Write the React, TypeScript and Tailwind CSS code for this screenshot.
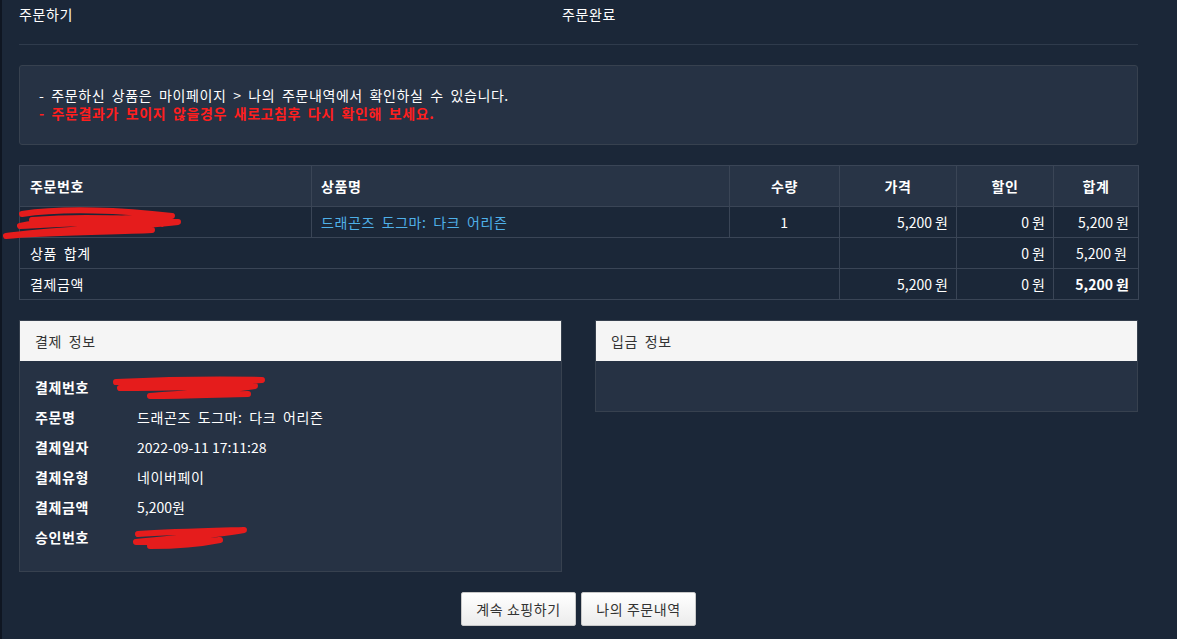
import React from 'react';

const font = { fontFamily: '"Noto Sans CJK KR", "Noto Sans", sans-serif' };

const Scribble: React.FC<{ className: string; d: string; w: number; h: number }> = ({ className, d, w, h }) => (
  <svg className={className} width={w} height={h} viewBox={`0 0 ${w} ${h}`} fill="none">
    <path d={d} stroke="#e51c1c" strokeWidth="6" strokeLinecap="round" strokeLinejoin="round" />
  </svg>
);

const payRows: [string, string | null, boolean][] = [
  ['결제번호', null, false],
  ['주문명', '드래곤즈 도그마: 다크 어리즌', false],
  ['결제일자', '2022-09-11 17:11:28', true],
  ['결제유형', '네이버페이', false],
  ['결제금액', '5,200원', true],
  ['승인번호', null, false],
];

const cell = 'border border-[#3a4556]';
const num = 'border border-[#3a4556] text-right tracking-normal [word-spacing:normal]';

const App: React.FC = () => {
  return (
    <div
      className="relative w-[1177px] h-[639px] overflow-hidden bg-[#1b2738] border-l-2 border-[#0f1622] text-[14px] leading-[18px] text-white tracking-[0.6px] [word-spacing:3px]"
      style={font}
    >
      <div className="ml-[17px] w-[1119px]">
        {/* steps */}
        <div className="flex pt-[5px]">
          <div className="w-[543px]">주문하기</div>
          <div>주문완료</div>
        </div>
        <div className="mt-[21px] border-t border-[#2f3b4c]" />

        {/* notice */}
        <div className="mt-[20px] rounded-[3px] border border-[#37414f] bg-[#263244] px-[19px] pt-[20px] pb-[22px]">
          <p>- 주문하신 상품은 마이페이지 &gt; 나의 주문내역에서 확인하실 수 있습니다.</p>
          <p className="font-bold text-[#ff1e1e]">- 주문결과가 보이지 않을경우 새로고침후 다시 확인해 보세요.</p>
        </div>

        {/* order table */}
        <table className="mt-[20px] w-[1119px] table-fixed border-collapse">
          <colgroup>
            <col className="w-[292px]" />
            <col className="w-[418px]" />
            <col className="w-[110px]" />
            <col className="w-[117px]" />
            <col className="w-[97px]" />
            <col className="w-[85px]" />
          </colgroup>
          <thead>
            <tr className="h-[41px] bg-[#283446]">
              <th className={`${cell} pl-[10px] text-left font-bold`}>주문번호</th>
              <th className={`${cell} pl-[9px] text-left font-bold`}>상품명</th>
              <th className={`${cell} text-center font-bold`}>수량</th>
              <th className={`${cell} text-center font-bold`}>가격</th>
              <th className={`${cell} text-center font-bold`}>할인</th>
              <th className={`${cell} text-center font-bold`}>합계</th>
            </tr>
          </thead>
          <tbody>
            <tr className="h-[31px]">
              <td className={`${cell} pl-[10px]`}></td>
              <td className={`${cell} pl-[9px] text-[#4fb0e8]`}>드래곤즈 도그마: 다크 어리즌</td>
              <td className={`${cell} text-center`}>1</td>
              <td className={`${num} pr-[8px]`}>5,200 원</td>
              <td className={`${num} pr-[8px]`}>0 원</td>
              <td className={`${num} pr-[9px]`}>5,200 원</td>
            </tr>
            <tr className="h-[31px]">
              <td colSpan={3} className={`${cell} pl-[10px]`}>상품 합계</td>
              <td className={cell}></td>
              <td className={`${num} pr-[8px]`}>0 원</td>
              <td className={`${num} pr-[11px]`}>5,200 원</td>
            </tr>
            <tr className="h-[31px]">
              <td colSpan={3} className={`${cell} pl-[10px]`}>결제금액</td>
              <td className={`${num} pr-[8px]`}>5,200 원</td>
              <td className={`${num} pr-[8px]`}>0 원</td>
              <td className={`${num} pr-[9px] font-bold`}>5,200 원</td>
            </tr>
          </tbody>
        </table>

        {/* info panels */}
        <div className="mt-[20px] flex items-start gap-[33px]">
          <div className="w-[543px] border border-[#37414f] bg-[#263244]">
            <div className="flex h-[40px] items-center bg-[#f5f5f5] px-[15px] text-[#333]">결제 정보</div>
            <div className="pt-[11px] pb-[19px]">
              {payRows.map(([label, value, isNum]) => (
                <div key={label} className="flex h-[30px] items-center pl-[15px]">
                  <span className="w-[102px] font-bold">{label}</span>
                  <span className={isNum ? 'tracking-normal [word-spacing:normal]' : ''}>{value}</span>
                </div>
              ))}
            </div>
          </div>
          <div className="w-[543px] border border-[#37414f] bg-[#263244]">
            <div className="flex h-[40px] items-center bg-[#f5f5f5] px-[15px] text-[#333]">입금 정보</div>
            <div className="h-[50px]" />
          </div>
        </div>

        {/* buttons */}
        <div className="mt-[20px] flex justify-center gap-[5px]">
          <button className="h-[34px] w-[115px] rounded-[2px] border border-[#c8c8c8] bg-gradient-to-b from-white to-[#ececec] text-[#333]">
            계속 쇼핑하기
          </button>
          <button className="h-[34px] w-[115px] rounded-[2px] border border-[#c8c8c8] bg-gradient-to-b from-white to-[#ececec] text-[#333]">
            나의 주문내역
          </button>
        </div>
      </div>

      {/* redaction scribbles */}
      <Scribble
        className="absolute left-0 top-[206px]"
        w={182}
        h={36}
        d="M20 8 C60 2 120 4 170 10 C120 14 50 12 18 20 C60 18 130 14 176 16 C120 22 40 24 4 30 C40 26 110 26 150 24 M30 14 C80 10 140 12 160 18"
      />
      <Scribble
        className="absolute left-[108px] top-[376px]"
        w={158}
        h={26}
        d="M6 6 C50 4 110 3 152 4 C110 8 40 10 10 12 C60 12 120 10 145 10 C110 16 60 18 40 20 C80 20 120 18 138 18"
      />
      <Scribble
        className="absolute left-[128px] top-[526px]"
        w={120}
        h={24}
        d="M8 8 C40 6 80 5 114 4 C80 10 40 12 6 16 C40 16 70 16 90 14 C70 18 40 20 20 20"
      />
    </div>
  );
};

export default App;
